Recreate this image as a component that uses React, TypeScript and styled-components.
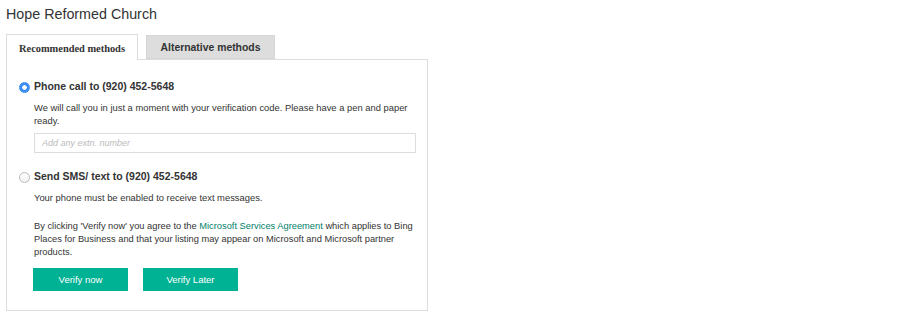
import React from "react";
import styled, { createGlobalStyle } from "styled-components";

const GlobalStyle = createGlobalStyle`
  body {
    margin: 0;
    background: #fff;
    font-family: "Liberation Sans", Arial, sans-serif;
    color: #333;
  }
`;

const Page = styled.div`
  padding: 4px 6px;
  width: 422px;
`;

const Title = styled.h1`
  margin: 0 0 10px;
  font-size: 14.3px;
  font-weight: normal;
  line-height: 20px;
  color: #333;
`;

const Tabs = styled.div`
  display: flex;
  gap: 8px;
  align-items: flex-end;
`;

const Tab = styled.div<{ active?: boolean }>`
  box-sizing: border-box;
  width: ${(p) => (p.active ? "132px" : "129px")};
  height: ${(p) => (p.active ? "26px" : "24px")};
  margin-bottom: ${(p) => (p.active ? "-1px" : "0")};
  display: flex;
  align-items: center;
  justify-content: center;
  padding-top: ${(p) => (p.active ? "1px" : "0")};
  font-size: 10.4px;
  font-weight: bold;
  font-family: ${(p) =>
    p.active ? '"Liberation Serif", "Times New Roman", serif' : '"Liberation Sans", Arial, sans-serif'};
  color: #333;
  background: ${(p) => (p.active ? "#fff" : "#ddd")};
  border: 1px solid ${(p) => (p.active ? "#ddd" : "#d6d6d6")};
  border-bottom: ${(p) => (p.active ? "none" : "1px solid #d6d6d6")};
  position: relative;
  z-index: 1;
`;

const Panel = styled.div`
  box-sizing: border-box;
  border: 1px solid #ddd;
  padding: 18px 10px 18px 12px;
  height: 252px;
`;

const Option = styled.div<{ gap?: number }>`
  display: grid;
  grid-template-columns: 12px 1fr;
  column-gap: 3px;
  margin-top: ${(p) => p.gap ?? 0}px;
`;

const Radio = styled.span<{ checked?: boolean }>`
  box-sizing: border-box;
  width: 11px;
  height: 11px;
  margin-top: 4px;
  border-radius: 50%;
  border: 1px solid ${(p) => (p.checked ? "#3b8ff0" : "#bbb")};
  background: ${(p) =>
    p.checked ? "radial-gradient(circle, #fff 0 2px, #3d8ef2 2.5px)" : "linear-gradient(#fff, #f1f1f1)"};
`;

const Label = styled.div`
  font-size: 10.5px;
  font-weight: bold;
  line-height: 16px;
  color: #333;
`;

const Text = styled.p`
  grid-column: 2;
  margin: 7px 0 0;
  font-size: 9.4px;
  line-height: 13px;
  color: #333;
  padding-right: 4px;
`;

const Input = styled.input`
  grid-column: 2;
  box-sizing: border-box;
  margin: 6px 0 0;
  width: 382px;
  height: 20px;
  border: 1px solid #ddd;
  padding: 0 7px;
  font-size: 9px;
  font-family: "Liberation Sans", Arial, sans-serif;
  outline: none;
  &::placeholder {
    color: #bbb;
    font-style: italic;
  }
`;

const Agreement = styled.p`
  margin: 16px 0 0 15px;
  font-size: 9.3px;
  line-height: 13px;
  color: #333;
`;

const Link = styled.a`
  color: #00806a;
  text-decoration: none;
`;

const Buttons = styled.div`
  display: flex;
  gap: 15px;
  margin: 9px 0 0 14px;
`;

const Button = styled.button`
  width: 95px;
  height: 23px;
  border: none;
  background: #00b294;
  color: #fff;
  font-size: 9.5px;
  font-family: "Liberation Sans", Arial, sans-serif;
  cursor: pointer;
`;

export default function App() {
  return (
    <>
      <GlobalStyle />
      <Page>
        <Title>Hope Reformed Church</Title>
        <Tabs>
          <Tab active>Recommended methods</Tab>
          <Tab>Alternative methods</Tab>
        </Tabs>
        <Panel>
          <Option>
            <Radio checked />
            <Label>Phone call to (920) 452-5648</Label>
            <Text>
              We will call you in just a moment with your verification code. Please have a pen and paper ready.
            </Text>
            <Input placeholder="Add any extn. number" />
          </Option>
          <Option gap={15}>
            <Radio />
            <Label>Send SMS/ text to (920) 452-5648</Label>
            <Text>Your phone must be enabled to receive text messages.</Text>
          </Option>
          <Agreement>
            By clicking 'Verify now' you agree to the <Link href="#">Microsoft Services Agreement</Link> which
            applies to Bing Places for Business and that your listing may appear on Microsoft and Microsoft partner
            products.
          </Agreement>
          <Buttons>
            <Button>Verify now</Button>
            <Button>Verify Later</Button>
          </Buttons>
        </Panel>
      </Page>
    </>
  );
}
